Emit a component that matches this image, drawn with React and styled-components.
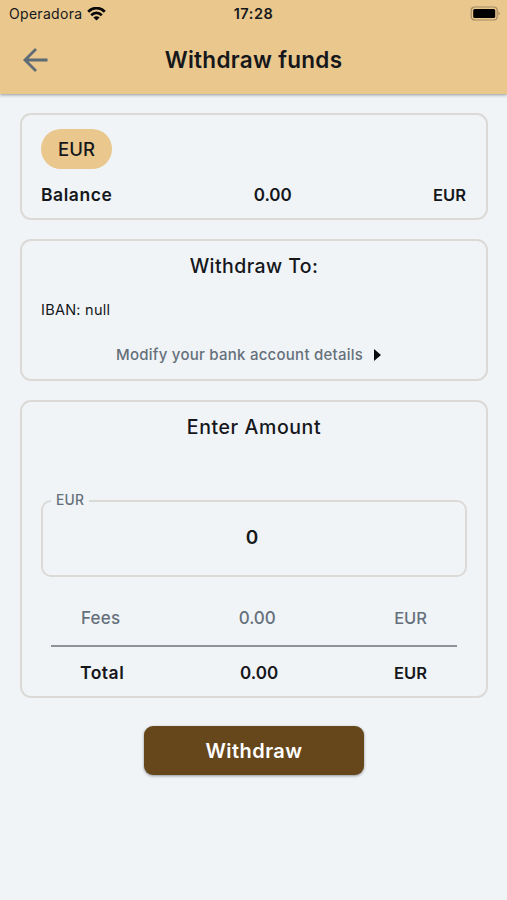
import React from "react";
import styled, { createGlobalStyle } from "styled-components";

const GlobalStyle = createGlobalStyle`
  * { box-sizing: border-box; }
  body { margin: 0; background: #f0f4f7; }
`;

const Screen = styled.main`
  width: 100%;
  max-width: 507px;
  min-height: 900px;
  background: #f0f4f7;
  color: #15171b;
  font-family: Inter, "Open Sans", sans-serif;
`;

const Header = styled.header`
  height: 94px;
  background: #e9c78d;
  box-shadow: 0 1px 3px rgba(60, 60, 60, 0.5);
`;

const StatusBar = styled.div`
  display: grid;
  grid-template-columns: 1fr auto 1fr;
  align-items: center;
  height: 27px;
  padding: 0 6px;
`;

const Carrier = styled.div`
  display: flex;
  align-items: center;
  gap: 5px;
  padding-left: 3px;
`;

const BatteryIcon = styled.svg`
  justify-self: end;
`;

const TitleBar = styled.div`
  display: grid;
  grid-template-columns: 60px 1fr 60px;
  align-items: center;
  height: 66px;
`;

const BackButton = styled.button`
  display: flex;
  margin: 0;
  padding: 0 0 0 22px;
  border: 0;
  background: none;
`;

const Label = styled.span`
  display: block;
  white-space: nowrap;
  font-size: ${(p) => p.$size}px;
  font-weight: ${(p) => p.$weight || 500};
  letter-spacing: ${(p) => p.$track || 0}px;
  line-height: 24px;
  color: ${(p) => p.$color || "inherit"};
`;

const Centered = styled.div`
  display: flex;
  justify-content: center;
`;

const Content = styled.div`
  display: flex;
  flex-direction: column;
  padding: 19px 19px 0 20px;
`;

const Card = styled.section`
  height: ${(p) => p.$height}px;
  margin-bottom: ${(p) => p.$after}px;
  padding: 0 19px;
  border: 2px solid #dcdad6;
  border-radius: 11px;
`;

const Chip = styled.div`
  display: flex;
  align-items: center;
  justify-content: center;
  width: 71px;
  height: 40px;
  margin-top: 14px;
  border-radius: 20px;
  background: #e9c78d;
`;

const AmountRow = styled.div`
  display: flex;
  justify-content: space-between;
  align-items: center;
  padding: ${(p) => p.$padding || "0"};
`;

const CardTitle = styled.h2`
  display: flex;
  justify-content: center;
  margin: 13px 0 0;
`;

const IbanRow = styled.div`
  margin-top: 20px;
`;

const DetailsLink = styled.a`
  display: flex;
  align-items: center;
  gap: 11px;
  margin: 21px 0 0 75px;
`;

const AmountField = styled.fieldset`
  display: flex;
  align-items: center;
  justify-content: center;
  height: 88px;
  min-width: 0;
  margin: 50px 0 0;
  padding: 0 4px 12px 0;
  border: 2px solid #dcdad6;
  border-radius: 10px;
`;

const AmountLegend = styled.legend`
  margin-left: 8px;
  padding: 0 5px;

  > span { margin-top: -1px; padding-bottom: 1px; }
`;

const Breakdown = styled.div`
  margin: 29px 10px 0;
`;

const Rule = styled.hr`
  height: 2px;
  margin: 15px 0 14px;
  border: 0;
  background: #8f9298;
`;

const WithdrawButton = styled.button`
  align-self: center;
  display: flex;
  align-items: center;
  justify-content: center;
  width: 220px;
  height: 49px;
  padding: 1px 0 0;
  border: 0;
  border-radius: 9px;
  background: #66461b;
  color: #fff;
  font-family: inherit;
  box-shadow: 0 1px 3px rgba(0, 0, 0, 0.4);
`;

const GRAY = "#66707b";

export default function App() {
  return (
    <Screen>
      <GlobalStyle />
      <Header>
        <StatusBar>
          <Carrier>
            <Label $size={14} $weight={400} $track={0.3}>Operadora</Label>
            <svg width="19" height="14" viewBox="0 0 19 14" fill="none" stroke="#080808" strokeWidth="2.7">
              <path d="M1.2 4.8C6-.2 13-.2 17.8 4.8" />
              <path d="M4.2 8.2C7.2 5.2 11.8 5.2 14.8 8.2" />
              <path d="M9.5 13.6 6.4 10.5Q9.5 8 12.6 10.5Z" fill="#080808" stroke="none" />
            </svg>
          </Carrier>
          <Label $size={14.5} $weight={600} $track={0.55}>17:28</Label>
          <BatteryIcon width="31" height="15" viewBox="0 0 31 15">
            <rect x="1.2" y="1" width="26" height="13" rx="3.5" fill="none" stroke="#a38b63" strokeWidth="1.2" />
            <rect x="3.2" y="3" width="22" height="9" rx="1.5" fill="#000" />
            <path d="M28.5 5.5Q31 7.5 28.5 9.5Z" fill="#a38b63" />
          </BatteryIcon>
        </StatusBar>
        <TitleBar>
          <BackButton aria-label="Back">
            <svg width="27" height="26" viewBox="0 0 27 26" fill="none" stroke="#5d6b75" strokeWidth="2.8">
              <path d="M25.5 13H3M14 2 3 13 14 24" />
            </svg>
          </BackButton>
          <Centered><Label $size={22.5} $weight={600} $track={0.3}>Withdraw funds</Label></Centered>
        </TitleBar>
      </Header>
      <Content>
        <Card $height={107} $after={19}>
          <Chip><Label $size={18.5}>EUR</Label></Chip>
          <AmountRow $padding="14px 1px 0 0">
            <Label $size={17.5} $weight={600} $track={0.55}>Balance</Label>
            <Label $size={17} $weight={600}>0.00</Label>
            <Label $size={16.5} $weight={600}>EUR</Label>
          </AmountRow>
        </Card>
        <Card $height={142} $after={19}>
          <CardTitle><Label $size={19.5} $track={0.42}>Withdraw To:</Label></CardTitle>
          <IbanRow><Label $size={14.5} $weight={400} $track={0.25}>IBAN: null</Label></IbanRow>
          <DetailsLink>
            <Label $size={15} $color={GRAY} $track={0.25}>Modify your bank account details</Label>
            <svg width="7" height="12" viewBox="0 0 7 12"><path d="M0 0 7 6 0 12Z" fill="#090b0e" /></svg>
          </DetailsLink>
        </Card>
        <Card $height={298} $after={28}>
          <CardTitle><Label $size={19.5} $track={0.6}>Enter Amount</Label></CardTitle>
          <AmountField>
            <AmountLegend><Label $size={13.8} $color={GRAY} $track={0.2}>EUR</Label></AmountLegend>
            <Label $size={19} $weight={600}>0</Label>
          </AmountField>
          <Breakdown>
            <AmountRow $padding="0 30px">
              <Label $size={17} $color={GRAY} $track={0.2}>Fees</Label>
              <Label $size={17} $color={GRAY}>0.00</Label>
              <Label $size={16.5} $color={GRAY}>EUR</Label>
            </AmountRow>
            <Rule />
            <AmountRow $padding="0 30px 0 29px">
              <Label $size={17.5} $weight={600} $track={0.5}>Total</Label>
              <Label $size={17} $weight={600}>0.00</Label>
              <Label $size={16.5} $weight={600}>EUR</Label>
            </AmountRow>
          </Breakdown>
        </Card>
        <WithdrawButton><Label $size={20} $weight={600} $track={0.45}>Withdraw</Label></WithdrawButton>
      </Content>
    </Screen>
  );
}
